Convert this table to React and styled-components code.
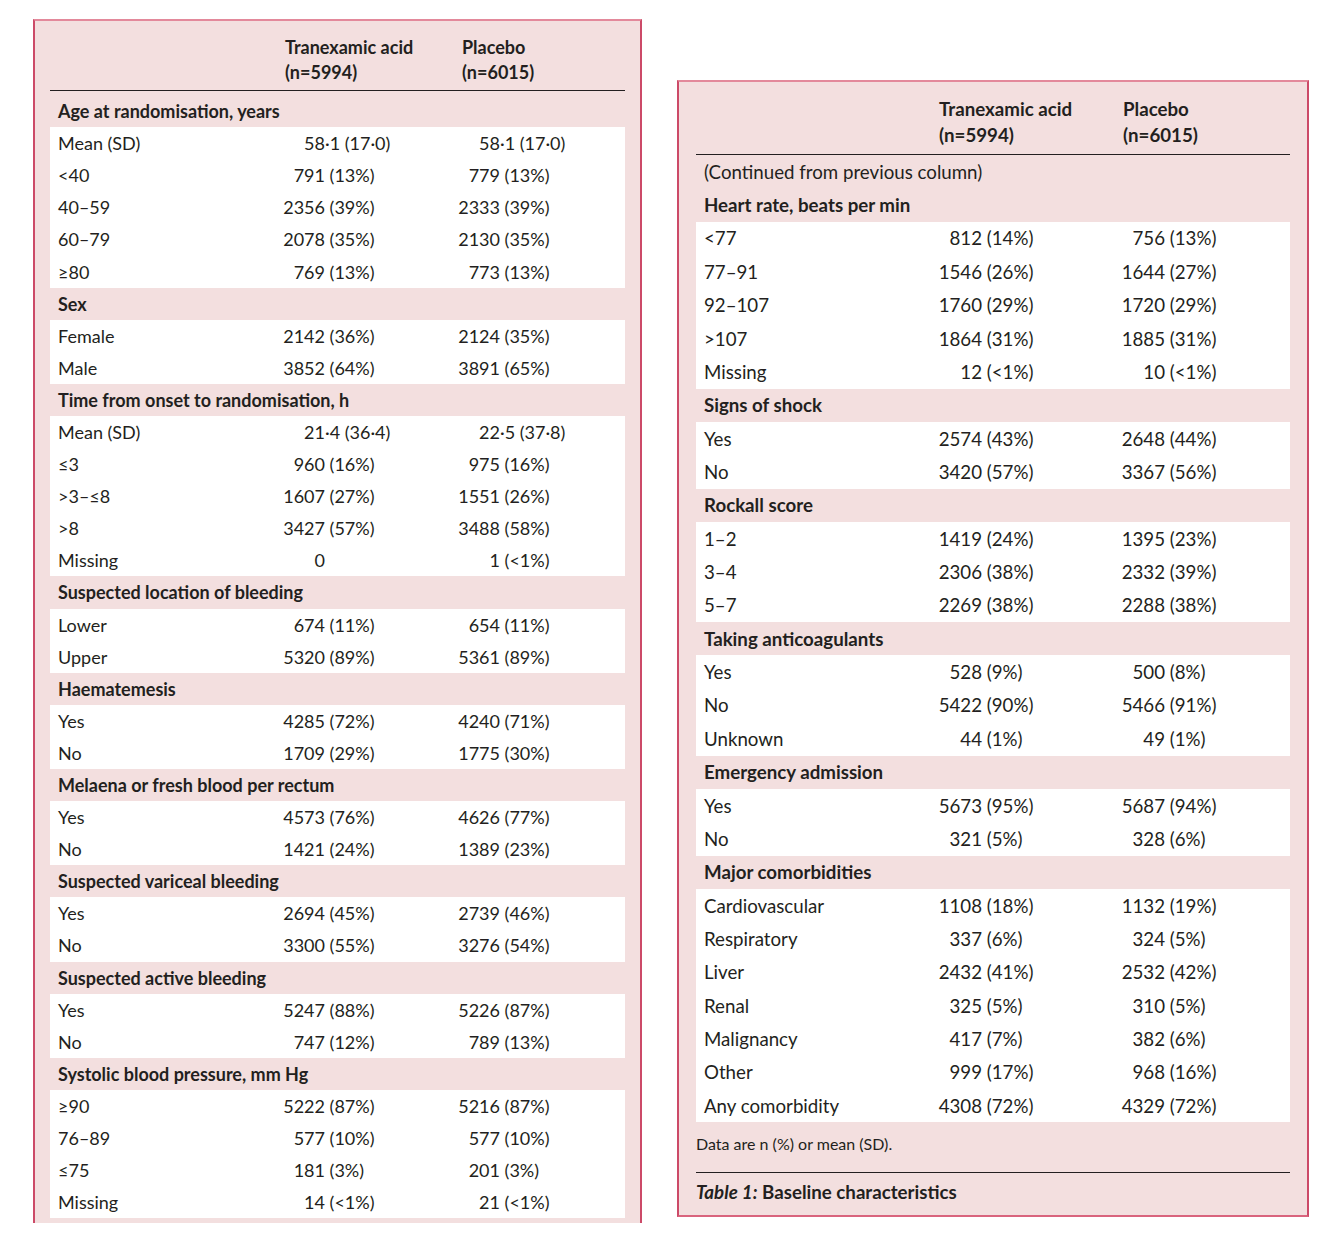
import React from "react";
import styled, { createGlobalStyle } from "styled-components";

const Global = createGlobalStyle`
  html, body { margin: 0; padding: 0; background: #ffffff; }
  body { font-family: Lato, "Open Sans", sans-serif; color: #231f20; }
`;

const Page = styled.div`
  display: flex;
  align-items: flex-start;
  gap: 35px;
  padding: 19px 0 0 33px;
  width: 1332px;
  height: 1236px;
  box-sizing: border-box;
  overflow: hidden;
`;

const Panel = styled.section`
  box-sizing: border-box;
  width: ${(p) => p.$width}px;
  margin-top: ${(p) => p.$top}px;
  background: #f3dfdf;
  border-left: 2px solid #cc4a68;
  border-right: 2px solid #cc4a68;
  border-top: 2px solid #e3899b;
  border-bottom: ${(p) => (p.$open ? "none" : "2px solid #d9647d")};
  padding: ${(p) => p.$pad};
  font-size: ${(p) => p.$fs}px;
`;

const Grid = styled.div`
  display: grid;
  grid-template-columns: ${(p) => p.$cols};
  align-items: center;
  padding-left: 8px;
  height: ${(p) => p.$h}px;
`;

const HeaderGrid = styled(Grid)`
  height: auto;
  align-items: start;
  font-weight: 700;
  line-height: ${(p) => p.$lh}px;
  padding-bottom: ${(p) => p.$pb}px;
  border-bottom: 1px solid #231f20;
  margin-bottom: ${(p) => p.$mb}px;
`;

const HeadCell = styled.div`
  white-space: pre-line;
`;

const Heading = styled.div`
  height: ${(p) => p.$h}px;
  display: flex;
  align-items: center;
  padding-left: 8px;
  font-weight: ${(p) => (p.$light ? 400 : 700)};
`;

const Block = styled.div`
  background: #ffffff;
`;

const Label = styled.div`
  white-space: nowrap;
`;

const Value = styled.div`
  display: flex;
  white-space: pre;
`;

const Int = styled.span`
  display: inline-flex;
  justify-content: flex-end;
  flex: none;
  width: ${(p) => p.$w}px;
`;

const Note = styled.div`
  font-size: 16px;
  padding: 12px 0 19px;
`;

const Caption = styled.div`
  border-top: 1px solid #231f20;
  padding-top: 8px;
  font-weight: 700;
  height: 43px;
  box-sizing: border-box;
`;

const Em = styled.em`
  font-style: italic;
`;

const left = [
  ["Age at randomisation, years", [
    ["Mean (SD)", "58·1 (17·0)", "58·1 (17·0)"],
    ["<40", "791 (13%)", "779 (13%)"],
    ["40–59", "2356 (39%)", "2333 (39%)"],
    ["60–79", "2078 (35%)", "2130 (35%)"],
    ["≥80", "769 (13%)", "773 (13%)"],
  ]],
  ["Sex", [
    ["Female", "2142 (36%)", "2124 (35%)"],
    ["Male", "3852 (64%)", "3891 (65%)"],
  ]],
  ["Time from onset to randomisation, h", [
    ["Mean (SD)", "21·4 (36·4)", "22·5 (37·8)"],
    ["≤3", "960 (16%)", "975 (16%)"],
    [">3–≤8", "1607 (27%)", "1551 (26%)"],
    [">8", "3427 (57%)", "3488 (58%)"],
    ["Missing", "0", "1 (<1%)"],
  ]],
  ["Suspected location of bleeding", [
    ["Lower", "674 (11%)", "654 (11%)"],
    ["Upper", "5320 (89%)", "5361 (89%)"],
  ]],
  ["Haematemesis", [
    ["Yes", "4285 (72%)", "4240 (71%)"],
    ["No", "1709 (29%)", "1775 (30%)"],
  ]],
  ["Melaena or fresh blood per rectum", [
    ["Yes", "4573 (76%)", "4626 (77%)"],
    ["No", "1421 (24%)", "1389 (23%)"],
  ]],
  ["Suspected variceal bleeding", [
    ["Yes", "2694 (45%)", "2739 (46%)"],
    ["No", "3300 (55%)", "3276 (54%)"],
  ]],
  ["Suspected active bleeding", [
    ["Yes", "5247 (88%)", "5226 (87%)"],
    ["No", "747 (12%)", "789 (13%)"],
  ]],
  ["Systolic blood pressure, mm Hg", [
    ["≥90", "5222 (87%)", "5216 (87%)"],
    ["76–89", "577 (10%)", "577 (10%)"],
    ["≤75", "181 (3%)", "201 (3%)"],
    ["Missing", "14 (<1%)", "21 (<1%)"],
  ]],
];

const right = [
  ["Heart rate, beats per min", [
    ["<77", "812 (14%)", "756 (13%)"],
    ["77–91", "1546 (26%)", "1644 (27%)"],
    ["92–107", "1760 (29%)", "1720 (29%)"],
    [">107", "1864 (31%)", "1885 (31%)"],
    ["Missing", "12 (<1%)", "10 (<1%)"],
  ]],
  ["Signs of shock", [
    ["Yes", "2574 (43%)", "2648 (44%)"],
    ["No", "3420 (57%)", "3367 (56%)"],
  ]],
  ["Rockall score", [
    ["1–2", "1419 (24%)", "1395 (23%)"],
    ["3–4", "2306 (38%)", "2332 (39%)"],
    ["5–7", "2269 (38%)", "2288 (38%)"],
  ]],
  ["Taking anticoagulants", [
    ["Yes", "528 (9%)", "500 (8%)"],
    ["No", "5422 (90%)", "5466 (91%)"],
    ["Unknown", "44 (1%)", "49 (1%)"],
  ]],
  ["Emergency admission", [
    ["Yes", "5673 (95%)", "5687 (94%)"],
    ["No", "321 (5%)", "328 (6%)"],
  ]],
  ["Major comorbidities", [
    ["Cardiovascular", "1108 (18%)", "1132 (19%)"],
    ["Respiratory", "337 (6%)", "324 (5%)"],
    ["Liver", "2432 (41%)", "2532 (42%)"],
    ["Renal", "325 (5%)", "310 (5%)"],
    ["Malignancy", "417 (7%)", "382 (6%)"],
    ["Other", "999 (17%)", "968 (16%)"],
    ["Any comorbidity", "4308 (72%)", "4329 (72%)"],
  ]],
];

function Num({ v, w }) {
  const m = v.match(/^(\d+)(.*)$/);
  return (
    <Value>
      <Int $w={w}>{m ? m[1] : v}</Int>
      <span>{m ? m[2] : ""}</span>
    </Value>
  );
}

function Sections({ data, cols, h, iw }) {
  return data.map(([title, rows]) => (
    <React.Fragment key={title}>
      <Heading $h={h}>{title}</Heading>
      <Block>
        {rows.map(([label, a, b]) => (
          <Grid key={label} $cols={cols} $h={h}>
            <Label>{label}</Label>
            <Num v={a} w={iw[0]} />
            <Num v={b} w={iw[1]} />
          </Grid>
        ))}
      </Block>
    </React.Fragment>
  ));
}

function Header({ cols, lh, pb, mb }) {
  return (
    <HeaderGrid $cols={cols} $lh={lh} $pb={pb} $mb={mb}>
      <HeadCell />
      <HeadCell>{"Tranexamic acid\n(n=5994)"}</HeadCell>
      <HeadCell>{"Placebo\n(n=6015)"}</HeadCell>
    </HeaderGrid>
  );
}

export default function App() {
  const lc = "227px 177px 1fr";
  const rc = "235px 184px 1fr";
  return (
    <>
      <Global />
      <Page>
        <Panel $width={609} $top={0} $open $pad="14px 15px 5px" $fs={18}>
          <Header cols={lc} lh={25} pb={5} mb={4} />
          <Sections data={left} cols={lc} h={32.1} iw={[40, 38]} />
        </Panel>
        <Panel $width={632} $top={61} $pad="15px 17px 0" $fs={18.7}>
          <Header cols={rc} lh={25.5} pb={6} mb={0} />
          <Heading $h={33.4} $light>(Continued from previous column)</Heading>
          <Sections data={right} cols={rc} h={33.36} iw={[43, 42]} />
          <Note>Data are n (%) or mean (SD).</Note>
          <Caption>
            <Em>Table 1:</Em> Baseline characteristics
          </Caption>
        </Panel>
      </Page>
    </>
  );
}
